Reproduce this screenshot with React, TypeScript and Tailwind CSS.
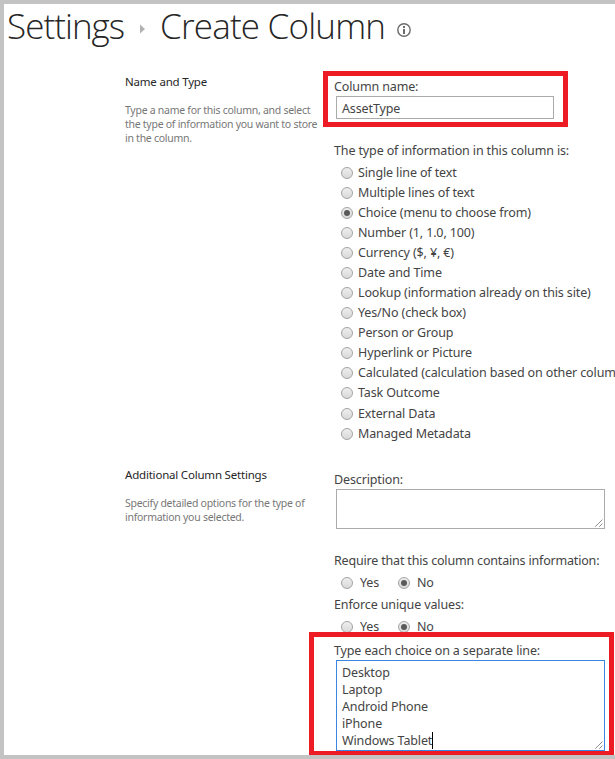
import React from 'react';

const columnTypes = [
  'Single line of text',
  'Multiple lines of text',
  'Choice (menu to choose from)',
  'Number (1, 1.0, 100)',
  'Currency ($, ¥, €)',
  'Date and Time',
  'Lookup (information already on this site)',
  'Yes/No (check box)',
  'Person or Group',
  'Hyperlink or Picture',
  'Calculated (calculation based on other colum',
  'Task Outcome',
  'External Data',
  'Managed Metadata',
];

const choices = ['Desktop', 'Laptop', 'Android Phone', 'iPhone', 'Windows Tablet'];

function Radio({ checked = false }: { checked?: boolean }) {
  return (
    <span className="mt-px flex size-3 shrink-0 items-center justify-center rounded-full border border-[#a3a3a3] bg-linear-to-b from-[#eeeeee] to-[#d9d9d9]">
      {checked && <span className="size-1.5 rounded-full bg-[#5a5a5a]" />}
    </span>
  );
}

function Option({ label, checked }: { label: string; checked?: boolean }) {
  return (
    <div className="flex h-5 items-center gap-[5px] pl-[7px]">
      <Radio checked={checked} />
      <span className="pt-px leading-[19px]">{label}</span>
    </div>
  );
}

function YesNo() {
  return (
    <div className="flex h-6 items-center pl-[7px]">
      <Radio />
      <span className="ml-[7px] w-[38px] pt-px leading-[21px]">Yes</span>
      <Radio checked />
      <span className="ml-[7px] pt-px leading-[21px]">No</span>
    </div>
  );
}

function Grip() {
  return (
    <svg className="absolute right-px bottom-px" width="8" height="8" viewBox="0 0 8 8" fill="none" stroke="#555" strokeWidth="1">
      <path d="M0.5 7.5L7.5 0.5M4.5 7.5L7.5 4.5" strokeDasharray="1.1 0.3" />
    </svg>
  );
}

export default function App() {
  return (
    <div className="h-[759px] w-[615px] overflow-hidden border-t-4 border-b-4 border-l-4 border-[#c3c3c3] bg-white font-['Noto_Sans','Open_Sans',sans-serif] text-[12.5px] tracking-[-0.13px] whitespace-nowrap text-[#444]">
      <h1 className="flex h-[58px] items-start pl-[3px] font-['Open_Sans',sans-serif] text-[35px] leading-[44px] font-light text-[#262626]">
        <span className="w-[133px] tracking-[-0.95px]">Settings</span>
        <svg className="mt-[20px] w-[5px]" width="5" height="10" viewBox="0 0 5 10">
          <path d="M0 0.5L5 5L0 9.5Z" fill="#b1b1b1" />
        </svg>
        <span className="ml-[15px] w-[237px] tracking-[-0.8px]">Create Column</span>
        <svg className="mt-[19px]" width="14" height="14" viewBox="0 0 14 14" fill="none">
          <circle cx="7" cy="7" r="6.2" stroke="#6b6b6b" strokeWidth="1.4" />
          <path d="M6 3H8V5H6ZM6 6H8V11H6Z" fill="#6b6b6b" />
        </svg>
      </h1>

      <section className="flex h-[393px]">
        <div className="ml-[121px] w-[209px] shrink-0 pt-[11px]">
          <h2 className="h-[30px] text-[11.5px] leading-[18px] tracking-[-0.2px] text-[#262626]">Name and Type</h2>
          <p className="text-[10.5px] leading-[14px] tracking-[-0.27px] text-[#777]">
            Type a name for this column, and select
            <br />
            the type of information you want to store
            <br />
            in the column.
          </p>
        </div>
        <div className="relative pt-[14px]">
          <div className="h-5 leading-[22px]">Column name:</div>
          <div className="ml-[2px] h-[23px] w-[218px] border border-[#ababab] pl-[5px] leading-[23px]">AssetType</div>
          <div className="absolute top-[9px] -left-[11px] h-[56px] w-[245px] border-[5px] border-[#ed1c24]" />
          <div className="mt-[21px] h-[22px] leading-[22px]">The type of information in this column is:</div>
          {columnTypes.slice(0, 12).map((t, i) => (
            <Option key={t} label={t} checked={i === 2} />
          ))}
          <div className="mt-px">
            {columnTypes.slice(12).map((t) => (
              <Option key={t} label={t} />
            ))}
          </div>
        </div>
      </section>

      <section className="flex h-[300px]">
        <div className="ml-[121px] w-[209px] shrink-0 pt-[11px]">
          <h2 className="h-[30px] text-[11.5px] leading-[18px] tracking-[-0.2px] text-[#262626]">Additional Column Settings</h2>
          <p className="text-[10.5px] leading-[14px] tracking-[-0.27px] text-[#777]">
            Specify detailed options for the type of
            <br />
            information you selected.
          </p>
        </div>
        <div className="relative pt-[14px]">
          <div className="h-5 leading-[22px]">Description:</div>
          <div className="relative ml-[2px] h-[40px] w-[269px] border border-[#ababab]">
            <Grip />
          </div>
          <div className="mt-[21px] h-5 leading-[22px] tracking-[-0.18px]">Require that this column contains information:</div>
          <YesNo />
          <div className="h-5 leading-[22px]">Enforce unique values:</div>
          <YesNo />
          <div className="mt-[2px] h-5 leading-[22px]">Type each choice on a separate line:</div>
          <div className="relative ml-[2px] h-[91px] w-[269px] border border-[#3b86e0] pt-[3px] pl-[5px] leading-[17px]">
            {choices.map((c, i) => (
              <div key={c} className="flex h-[17px] items-center">
                {c}
                {i === choices.length - 1 && <span className="h-[17px] w-px bg-black" />}
              </div>
            ))}
            <Grip />
          </div>
          <div className="absolute top-[177px] -left-[25px] h-[123px] w-[305px] border-[5px] border-b-4 border-[#ed1c24]" />
        </div>
      </section>
    </div>
  );
}
